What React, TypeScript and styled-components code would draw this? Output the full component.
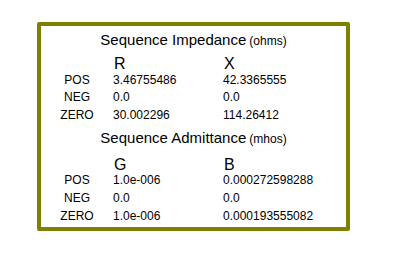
import { Fragment } from "react";
import styled, { createGlobalStyle } from "styled-components";

const GlobalStyle = createGlobalStyle`
  html, body {
    margin: 0;
    padding: 0;
    background: #ffffff;
  }
  body {
    font-family: "Liberation Sans", Arial, sans-serif;
    color: #000000;
  }
`;

const Page = styled.div`
  padding: 22px 0 0 37px;
`;

const Panel = styled.div`
  box-sizing: border-box;
  width: 313px;
  height: 209px;
  border: 4px solid #808000;
  border-radius: 2px;
  padding-top: 5px;
  display: flex;
  flex-direction: column;
  gap: 4px;
`;

const Section = styled.div`
  display: flex;
  flex-direction: column;
`;

const Title = styled.div<{ $gap: number }>`
  text-align: center;
  font-size: 15px;
  line-height: 17px;
  margin-bottom: ${(p) => p.$gap}px;
  white-space: nowrap;
`;

const Unit = styled.span`
  font-size: 12px;
  margin-left: 3px;
`;

const Table = styled.div`
  display: grid;
  grid-template-columns: 72px 110px 1fr;
  grid-auto-rows: 17.7px;
  font-size: 12px;
  line-height: 17.7px;
`;

const Header = styled.div`
  font-size: 16px;
  line-height: 19px;
  height: 19px;
  padding-left: 1px;
`;

const Label = styled.div`
  text-align: center;
`;

const Value = styled.div`
  white-space: nowrap;
`;

type Row = { name: string; a: string; b: string };

interface SectionProps {
  title: string;
  unit: string;
  gap: number;
  cols: [string, string];
  rows: Row[];
}

function DataSection({ title, unit, gap, cols, rows }: SectionProps) {
  return (
    <Section>
      <Title $gap={gap}>
        {title}
        <Unit>({unit})</Unit>
      </Title>
      <Table>
        <div />
        <Header>{cols[0]}</Header>
        <Header>{cols[1]}</Header>
        {rows.map((r) => (
          <Fragment key={r.name}>
            <Label>{r.name}</Label>
            <Value>{r.a}</Value>
            <Value>{r.b}</Value>
          </Fragment>
        ))}
      </Table>
    </Section>
  );
}

const impedance: Row[] = [
  { name: "POS", a: "3.46755486", b: "42.3365555" },
  { name: "NEG", a: "0.0", b: "0.0" },
  { name: "ZERO", a: "30.002296", b: "114.26412" },
];

const admittance: Row[] = [
  { name: "POS", a: "1.0e-006", b: "0.000272598288" },
  { name: "NEG", a: "0.0", b: "0.0" },
  { name: "ZERO", a: "1.0e-006", b: "0.000193555082" },
];

export default function App() {
  return (
    <>
      <GlobalStyle />
      <Page>
        <Panel>
          <DataSection
            title="Sequence Impedance"
            unit="ohms"
            gap={4}
            cols={["R", "X"]}
            rows={impedance}
          />
          <DataSection
            title="Sequence Admittance"
            unit="mhos"
            gap={7}
            cols={["G", "B"]}
            rows={admittance}
          />
        </Panel>
      </Page>
    </>
  );
}
